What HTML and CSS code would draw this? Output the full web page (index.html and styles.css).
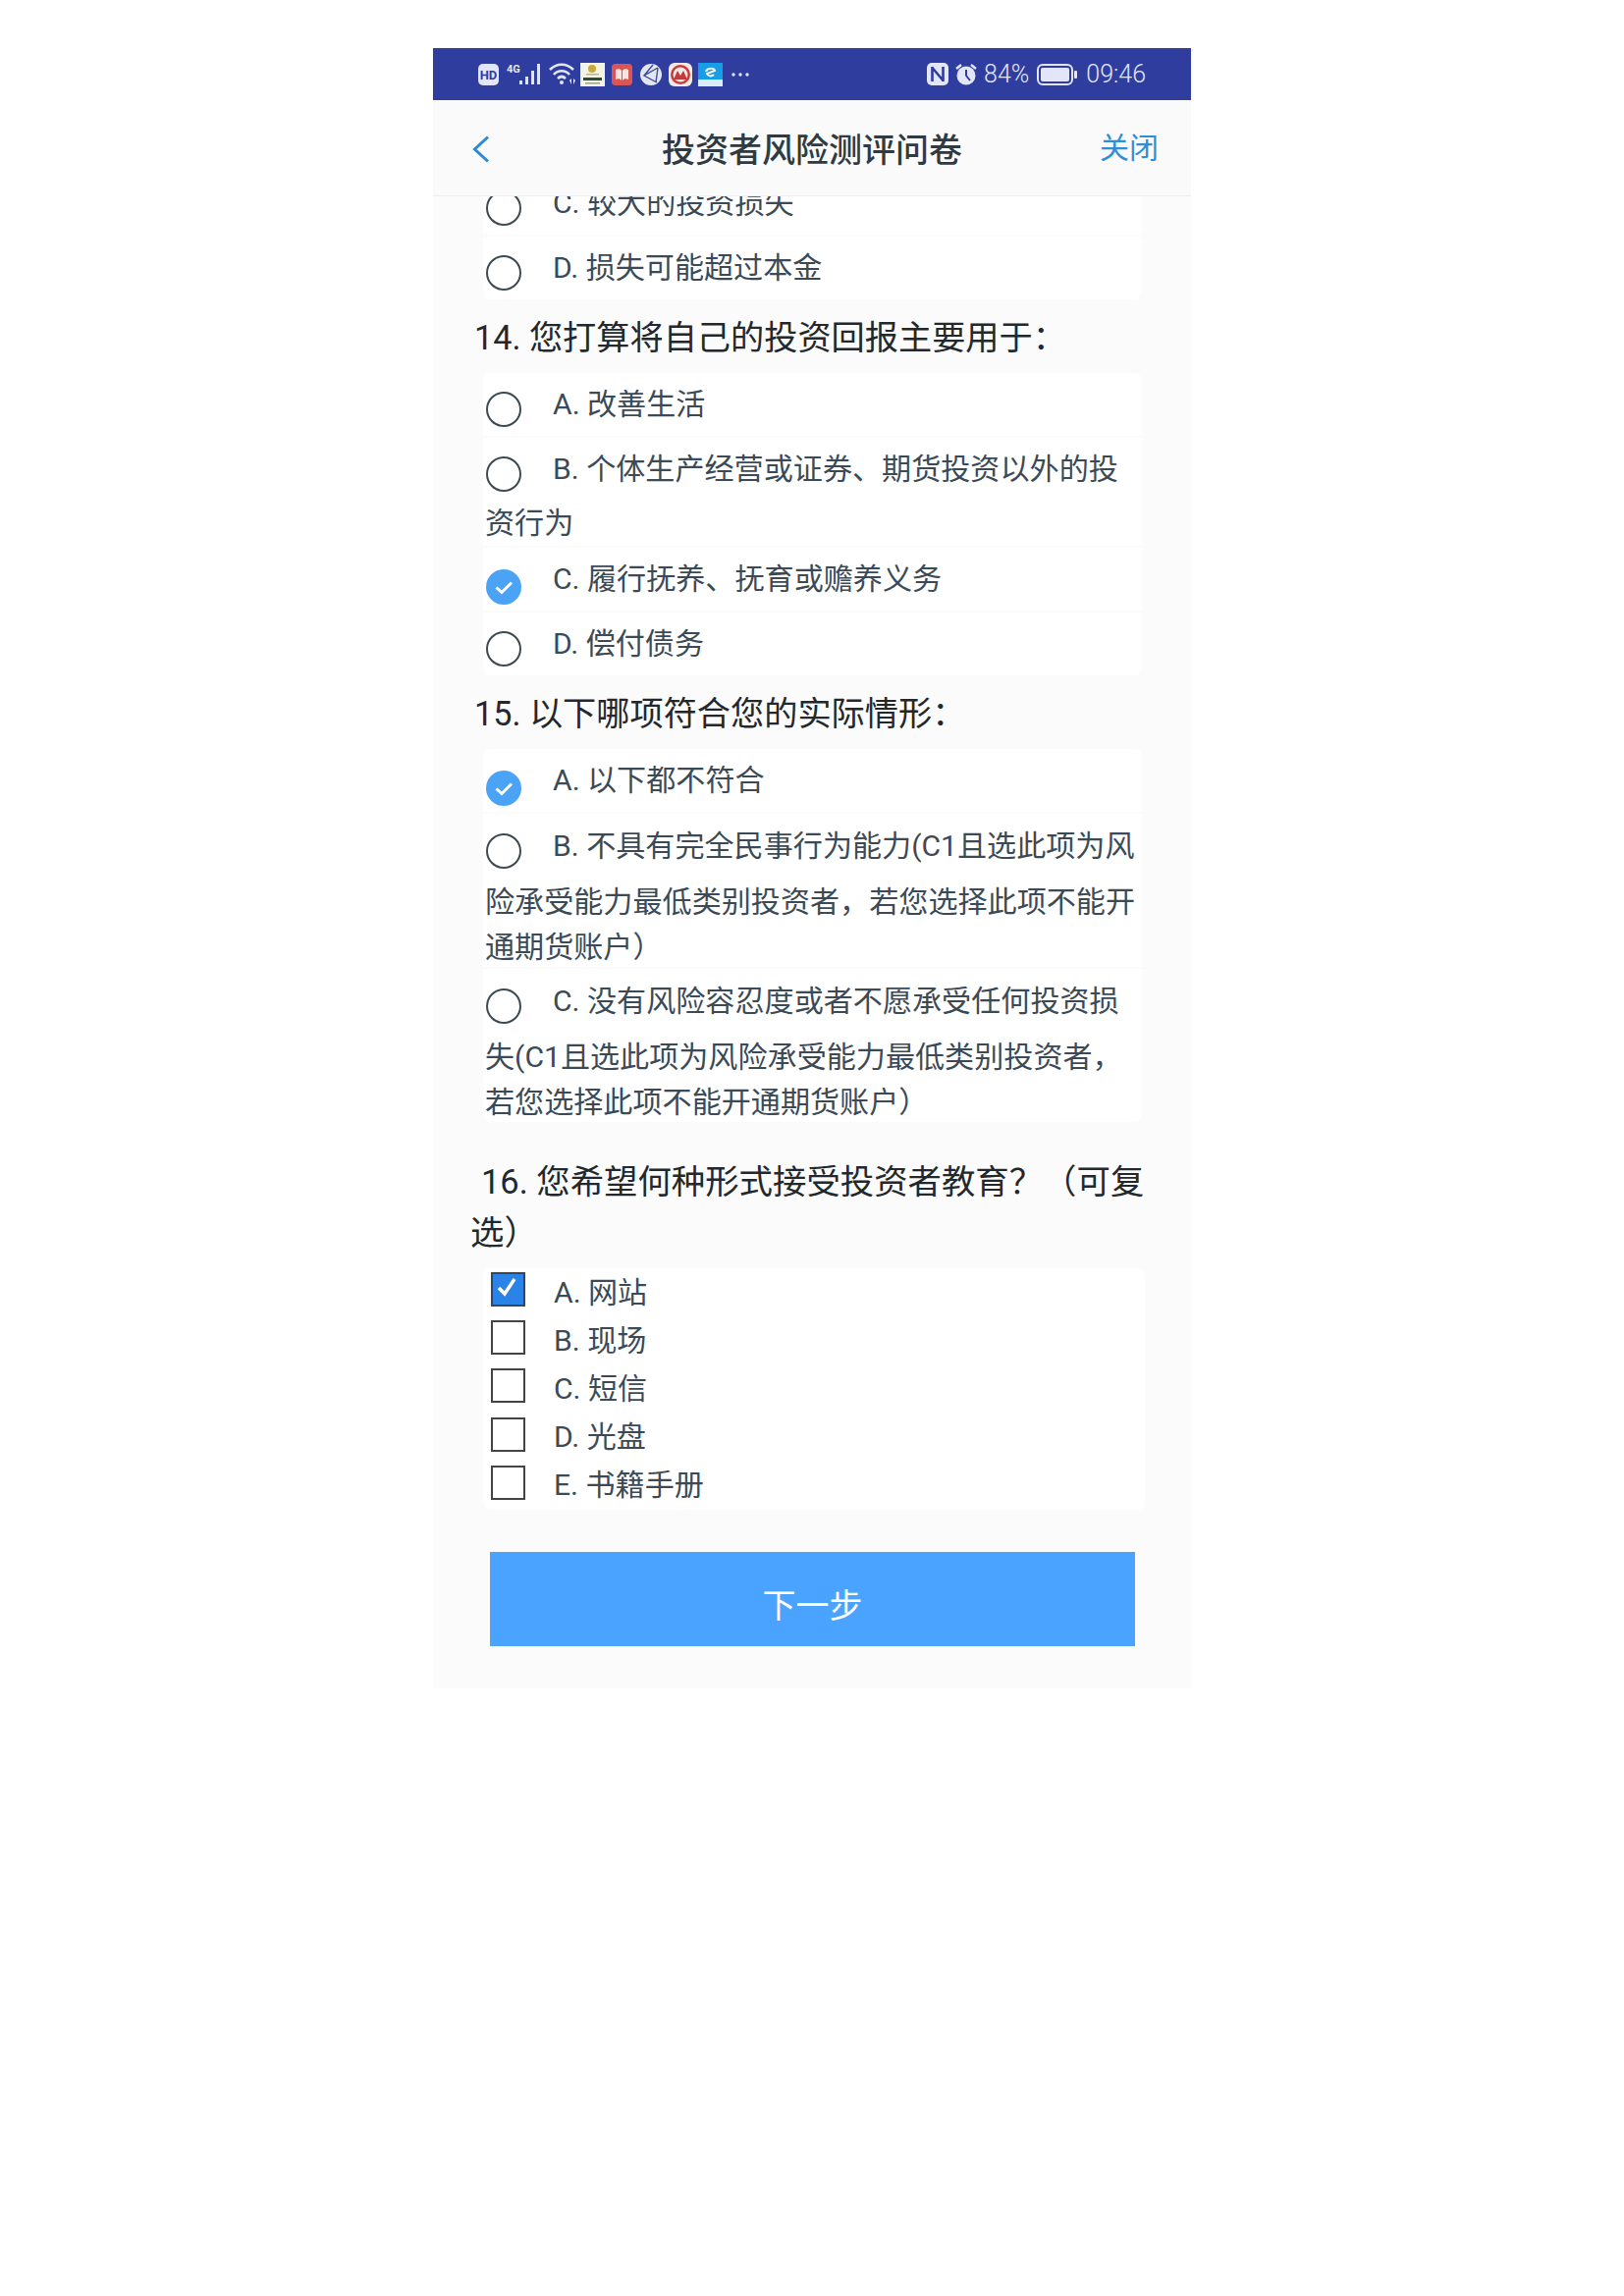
FILE: index.html
```html
<!DOCTYPE html>
<html lang="zh-CN">
<head>
<meta charset="utf-8">
<title>投资者风险测评问卷</title>
<link rel="stylesheet" href="styles.css">
</head>
<body>
<main class="phone">
  <div class="status">
    <div class="status-left">
      <svg class="ic" width="21" height="22" viewBox="0 0 21 22"><rect width="21" height="22" y="0" rx="5" fill="#e3e6f8"/><text x="10.5" y="16" text-anchor="middle" class="hd">HD</text></svg>
      <svg class="ic sig" width="36" height="23" viewBox="0 0 36 23"><text x="0" y="10" class="fg">4G</text><rect x="13" y="18" width="3" height="4" fill="#e3e6f8"/><rect x="19" y="14" width="3" height="8" fill="#e3e6f8"/><rect x="25" y="8" width="3" height="14" fill="#e3e6f8"/><rect x="31" y="1" width="3" height="21" fill="#e3e6f8"/></svg>
      <svg class="ic wifi" width="28" height="23" viewBox="0 0 28 23" fill="none" stroke="#e3e6f8" stroke-width="2.6"><path d="M1 7c7-7 17-7 24 0"/><path d="M5 12c4.500-5 11.500-5 16 0"/><path d="M9 16c2.500-2.500 5.500-2.500 8 0"/><circle cx="13" cy="20" r="2" fill="#e3e6f8" stroke="none"/><path d="M21 18l2-2v6zM27 18l-2-2v6z" fill="#e3e6f8" stroke="none"/></svg>
      <svg class="ic app1" width="25" height="24" viewBox="0 0 25 24"><rect width="25" height="24" fill="#f5f3e2"/><circle cx="12" cy="6" r="4" fill="#c9a93a"/><rect x="6" y="11" width="13" height="1.500" fill="#b9b68c"/><rect x="3" y="15" width="19" height="3" fill="#2c4d3a"/><rect x="5" y="20" width="15" height="1.500" fill="#98a58f"/></svg>
      <svg class="ic app2" width="21" height="22" viewBox="0 0 21 22"><rect width="21" height="22" rx="4" fill="#dc5555"/><path d="M4 6c2-1 5-1 6 1v10c-1-2-4-2-6-1zM17 6c-2-1-5-1-6 1v10c1-2 4-2 6-1z" fill="#f7e3e0"/></svg>
      <svg class="ic app3" width="24" height="24" viewBox="0 0 24 24" fill="none"><circle cx="12" cy="12" r="11" fill="#e3e6ee"/><path d="M19 5L5 13l13 7M19 5l-2 15M5 13l9-11" stroke="#3d4aa0" stroke-width="1.400"/></svg>
      <svg class="ic app4" width="24" height="24" viewBox="0 0 24 24"><rect width="24" height="24" rx="6" fill="#f5e9e6"/><circle cx="12" cy="12" r="10" fill="#c63a3a"/><circle cx="12" cy="12" r="7.500" fill="#f5e9e6"/><path d="M5 17l4-9 3 5 3-5 4 9z" fill="#c63a3a"/></svg>
      <svg class="ic app5" width="25" height="24" viewBox="0 0 25 24"><rect width="25" height="24" fill="#169fe6"/><rect y="17" width="25" height="7" fill="#d7eef8"/><path d="M8 9c1-4 8-4 9-1l-8 3c1 3 5 3 7 1" fill="none" stroke="#fff" stroke-width="2"/></svg>
      <svg class="ic dots" width="18" height="4" viewBox="0 0 18 4" fill="#e3e6f8"><circle cx="2" cy="2" r="1.700"/><circle cx="9" cy="2" r="1.700"/><circle cx="16" cy="2" r="1.700"/></svg>
    </div>
    <div class="status-right">
      <svg class="ic nfc" width="22" height="23" viewBox="0 0 22 23"><rect width="22" height="23" rx="5" fill="#e3e6f8"/><path d="M5.500 4v15M16.500 4v15M5.500 5l11 13" stroke="#2f3e9e" stroke-width="2.600" fill="none"/></svg>
      <svg class="ic alarm" width="24" height="23" viewBox="0 0 24 23"><circle cx="12" cy="13" r="9.500" fill="#e3e6f8"/><path d="M12 7v6l4 5" stroke="#2f3e9e" stroke-width="2" fill="none"/><path d="M2 6l5-4M22 6l-5-4" stroke="#e3e6f8" stroke-width="2.400" fill="none"/></svg>
      <span class="pct">84%</span>
      <svg class="ic bat" width="41" height="22" viewBox="0 0 41 22"><rect x="1" y="1" width="35" height="20" rx="5" fill="none" stroke="#e3e6f8" stroke-width="2"/><rect x="4" y="4" width="29" height="14" rx="2" fill="#e3e6f8"/><rect x="38" y="7" width="3" height="8" rx="1" fill="#e3e6f8"/></svg>
      <span class="time">09:46</span>
    </div>
  </div>

  <header class="nav">
    <svg class="back" width="18" height="28" viewBox="0 0 18 28" fill="none"><path d="M16 1.500L2.500 14 16 26.500" stroke="#2b8ad6" stroke-width="3"/></svg>
    <h1 class="title">投资者风险测评问卷</h1>
    <a class="close">关闭</a>
  </header>

  <section class="content">
    <div class="card first">
      <div class="opt"><i class="radio"></i>C. 较大的投资损失</div>
      <div class="opt"><i class="radio"></i>D. 损失可能超过本金</div>
    </div>

    <h2 class="q">14. 您打算将自己的投资回报主要用于：</h2>
    <div class="card">
      <div class="opt"><i class="radio"></i>A. 改善生活</div>
      <div class="opt"><i class="radio"></i>B. 个体生产经营或证券、期货投资以外的投<br>资行为</div>
      <div class="opt"><i class="radio on"><svg width="36" height="36" viewBox="0 0 36 36" fill="none"><path d="M10.500 18.500l5.500 5 10-10" stroke="#fff" stroke-width="3"/></svg></i>C. 履行抚养、抚育或赡养义务</div>
      <div class="opt"><i class="radio"></i>D. 偿付债务</div>
    </div>

    <h2 class="q">15. 以下哪项符合您的实际情形：</h2>
    <div class="card">
      <div class="opt"><i class="radio on"><svg width="36" height="36" viewBox="0 0 36 36" fill="none"><path d="M10.500 18.500l5.500 5 10-10" stroke="#fff" stroke-width="3"/></svg></i>A. 以下都不符合</div>
      <div class="opt long"><i class="radio"></i>B. 不具有完全民事行为能力(C1且选此项为风<br>险承受能力最低类别投资者，若您选择此项不能开<br>通期货账户）</div>
      <div class="opt long"><i class="radio"></i>C. 没有风险容忍度或者不愿承受任何投资损<br>失(C1且选此项为风险承受能力最低类别投资者，<br>若您选择此项不能开通期货账户）</div>
    </div>

    <h2 class="q multi">16. 您希望何种形式接受投资者教育？（可复选）</h2>
    <div class="card checks">
      <div class="chk"><i class="box on"><svg width="30" height="30" viewBox="0 0 30 30" fill="none"><path d="M6 14l6 6 10-15" stroke="#fff" stroke-width="3.500"/></svg></i>A. 网站</div>
      <div class="chk"><i class="box"></i>B. 现场</div>
      <div class="chk"><i class="box"></i>C. 短信</div>
      <div class="chk"><i class="box"></i>D. 光盘</div>
      <div class="chk"><i class="box"></i>E. 书籍手册</div>
    </div>

    <div class="btn-wrap"><button class="next">下一步</button></div>
  </section>
</main>
</body>
</html>
```
FILE: styles.css
```css
* { box-sizing: border-box; }
html, body { margin: 0; background: #fff; }
body {
  padding: 49px 0 0 441px;
  min-height: 2339px;
  font-family: Roboto, "Noto Sans CJK SC", sans-serif;
}
.phone { width: 772px; height: 1671px; background: #fbfbfb; overflow: hidden; }

.status {
  height: 53px;
  background: #2f3e9e;
  display: flex;
  justify-content: space-between;
  align-items: center;
  padding: 0 46px;
  color: #e3e6f8;
  font-size: 25px;
}
.status-left, .status-right { display: flex; align-items: center; }
.status-left { gap: 7px; }
.status-right { gap: 6px; }
.ic { display: block; flex: none; }
.hd { font: 700 13px Roboto, sans-serif; fill: #2f3e9e; }
.fg { font: 700 11px Roboto, sans-serif; fill: #e3e6f8; }
.sig { margin-left: 1px; }
.wifi { margin-right: -3px; }
.app3, .app4 { margin-right: -1px; }
.dots { margin-left: 2px; margin-top: 1px; }
.pct, .time { line-height: 30px; font-weight: 300; }
.pct { margin-right: 2px; }
.time { margin-left: 3px; }

.nav {
  height: 98px;
  background: #fafafa;
  border-bottom: 1px solid #eeeeee;
  display: grid;
  grid-template-columns: 1fr auto 1fr;
  align-items: center;
  padding: 0 33px 0 40px;
  position: relative;
  z-index: 1;
}
.back { margin-top: 3px; }
.title {
  margin: 0 7px 0 0;
  font-size: 34px;
  font-weight: 500;
  color: #2f3a42;
}
.close {
  justify-self: end;
  font-size: 30px;
  color: #2e8fd8;
  margin-bottom: 5px;
}

.card { margin: 0 50px 0 51px; background: #fbfbfb; border-radius: 8px; overflow: hidden; }
.card.first { margin-top: -25px; }
.opt {
  background: #fff;
  padding-left: 2px;
  margin-bottom: 2px;
  font-size: 30.100px;
  line-height: 46px;
  color: #3b4a56;
  white-space: nowrap;
}
.opt:last-child { margin-bottom: 0; }
.opt.long { height: 156px; }
.radio {
  display: inline-block;
  width: 36px;
  height: 36px;
  margin: 19px 32px 9px 1px;
  vertical-align: -22px;
  border: 2.500px solid #3c4a52;
  border-radius: 50%;
}
.long .radio {
  margin-top: 20px;
  margin-bottom: 11px;
  vertical-align: -24px;
}
.radio.on {
  background: #4ba3f5;
  border: 0;
  margin-top: 22px;
  margin-bottom: 6px;
}
.radio svg { display: block; }

.q {
  margin: 0;
  padding: 0 0 0 42px;
  height: 75px;
  line-height: 78px;
  font-size: 34.200px;
  font-weight: 400;
  color: #22282c;
}
.q.multi {
  height: 149px;
  padding: 35px 33px 0 38px;
  line-height: 52px;
  font-size: 34.400px;
  text-indent: 11px;
}
.checks { background: #fff; margin-right: 47px; }
.chk {
  height: 49.200px;
  display: flex;
  align-items: center;
  font-size: 30.100px;
  color: #3b4a56;
  padding: 0 0 6px 8px;
}
.box {
  width: 35px;
  height: 35px;
  border: 2.500px solid #444;
  margin-right: 29px;
  flex: none;
}
.box.on { background: #2b83e8; }
.box svg { display: block; }

.btn-wrap { padding: 43px 0 43px 58px; }
.next {
  display: block;
  width: 657px;
  height: 96px;
  border: 0;
  background: #4aa3ff;
  color: #fff;
  font: 400 34px Roboto, "Noto Sans CJK SC", sans-serif;
  padding: 9px 0 0;
}
```
